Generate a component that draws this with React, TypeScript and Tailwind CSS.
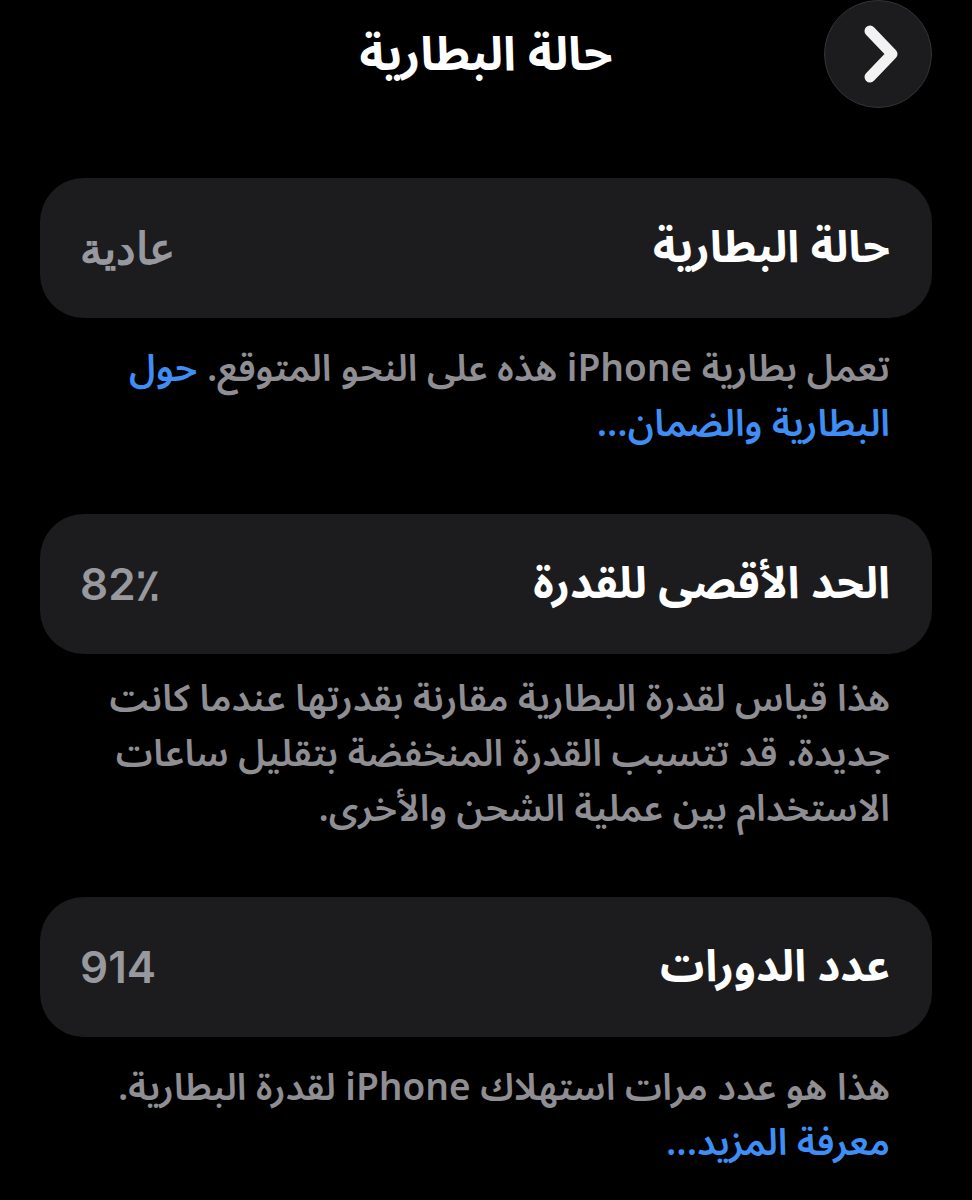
const font = { fontFamily: '"Noto Sans Arabic", "DejaVu Sans", Inter, sans-serif' };

function Row({ label, value }: { label: string; value: string }) {
  return (
    <div className="mx-10 flex h-[140px] items-center justify-between rounded-[44px] bg-[#1c1c1e] pl-[40px] pr-[42px]">
      <span className="text-[44px] font-bold text-white">{label}</span>
      <span className="font-['Inter'] text-[44px] font-semibold text-[#98989f]" dir="ltr">{value}</span>
    </div>
  );
}

function Note({ children }: { children: React.ReactNode }) {
  return (
    <p className="mx-10 pr-[42px] pl-[40px] text-[37px] font-semibold leading-[55px] text-[#8e8e93]">
      {children}
    </p>
  );
}

export default function App() {
  return (
    <div dir="rtl" className="min-h-[1200px] w-[972px] bg-black" style={font}>
      <header className="relative flex h-[110px] items-center justify-center">
        <h1 className="text-[47px] font-bold text-white">حالة البطارية</h1>
        <button className="absolute right-[40px] top-0 flex h-[108px] w-[108px] items-center justify-center rounded-full border border-[#333336] bg-[#1c1c1e]">
          <svg width="44" height="64" viewBox="0 0 44 64" fill="none" className="ml-[8px]">
            <path d="M10 9 L32 32 L10 55" stroke="#f2f2f2" strokeWidth="11" strokeLinecap="round" strokeLinejoin="round" />
          </svg>
        </button>
      </header>

      <div className="mt-[68px]">
        <Row label="حالة البطارية" value="عادية" />
      </div>
      <div className="mt-[24px]">
        <Note>
          تعمل بطارية iPhone هذه على النحو المتوقع. <span className="text-[#3f8ef5]">حول<br />البطارية والضمان...</span>
        </Note>
      </div>

      <div className="mt-[62px]">
        <Row label="الحد الأقصى للقدرة" value="82٪" />
      </div>
      <div className="mt-[18px]">
        <Note>
          هذا قياس لقدرة البطارية مقارنة بقدرتها عندما كانت
          <br />
          جديدة. قد تتسبب القدرة المنخفضة بتقليل ساعات
          <br />
          الاستخدام بين عملية الشحن والأخرى.
        </Note>
      </div>

      <div className="mt-[60px]">
        <Row label="عدد الدورات" value="914" />
      </div>
      <div className="mt-[24px]">
        <Note>
          هذا هو عدد مرات استهلاك iPhone لقدرة البطارية.
          <br />
          <span className="text-[#3f8ef5]">معرفة المزيد...</span>
        </Note>
      </div>
    </div>
  );
}
